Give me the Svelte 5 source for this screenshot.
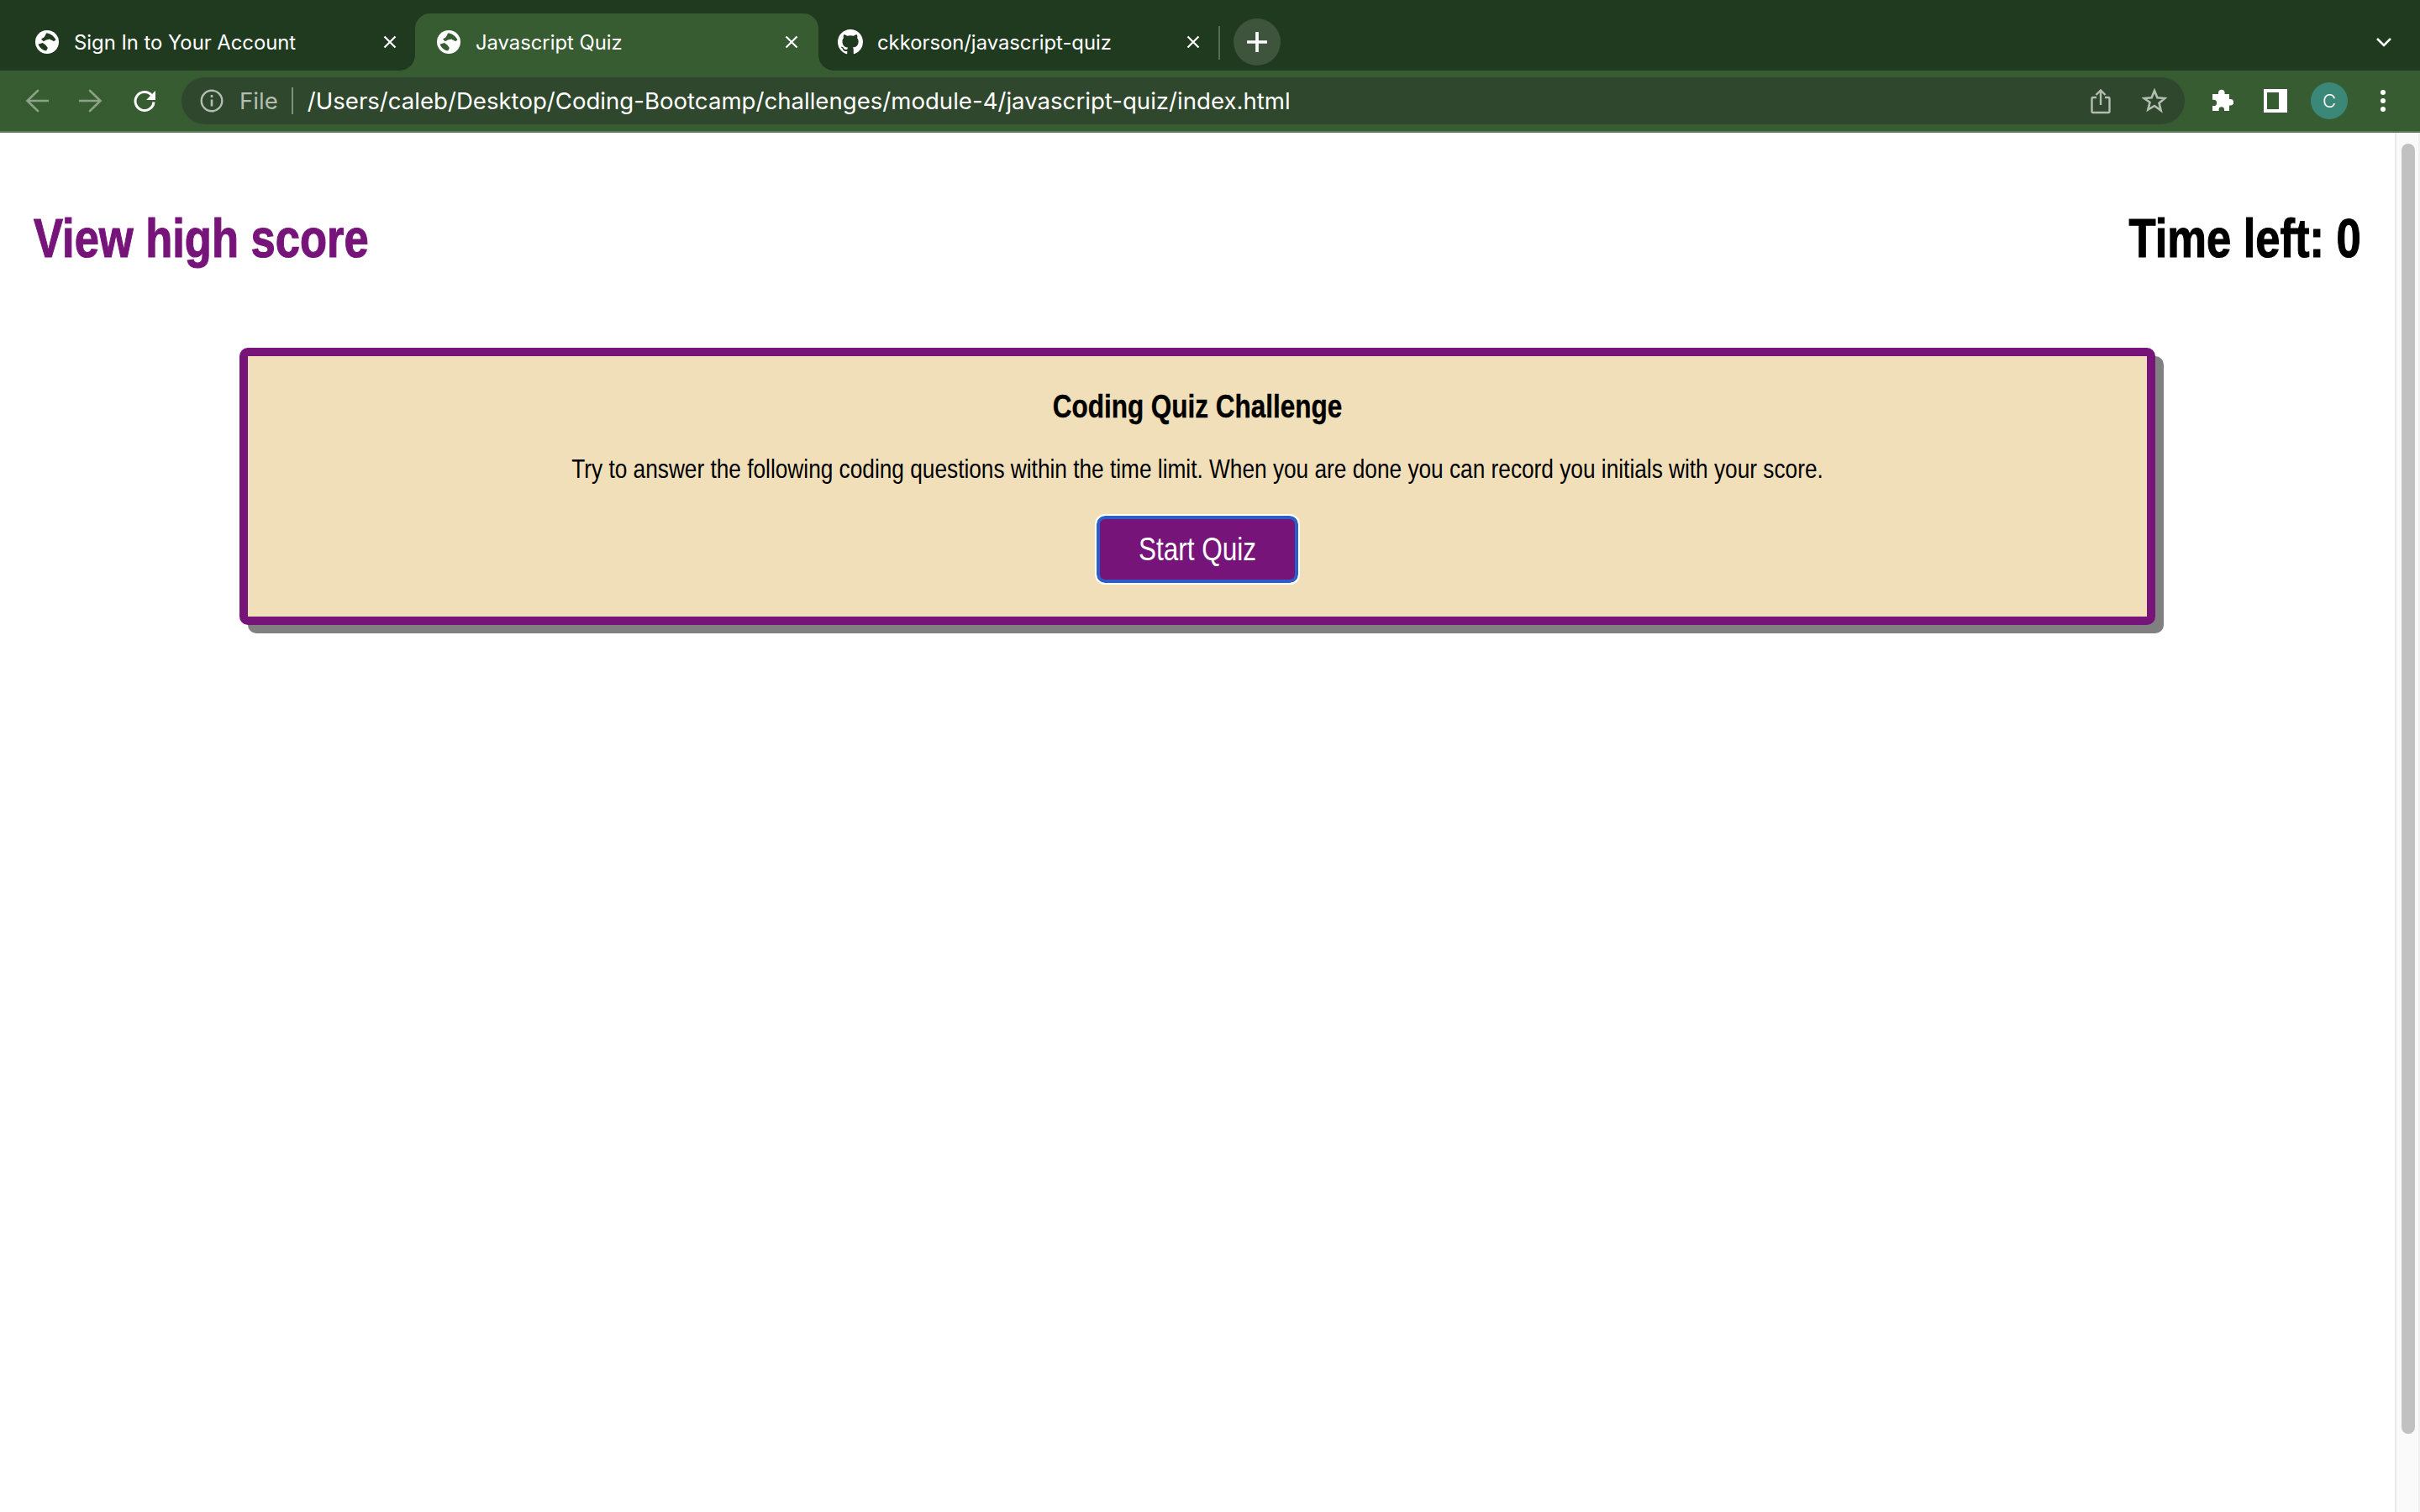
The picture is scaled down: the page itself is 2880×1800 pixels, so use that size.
<script>
  const tabs = [
    { title: "Sign In to Your Account", icon: "globe" },
    { title: "Javascript Quiz", icon: "globe", active: true },
    { title: "ckkorson/javascript-quiz", icon: "github" },
  ];
</script>

<div class="browser">
  <div class="tabstrip">
    {#each tabs as tab}
      <div class="tab" class:active={tab.active}>
        {#if tab.icon === "globe"}
          <svg class="favicon" viewBox="0 0 32 32">
            <circle cx="16" cy="16" r="16" fill="#fff" />
            <path
              d="M15 4c4 0 10 3 13 9l-3 2c-2-2-4-1-5-3l-5 1-4 2-3-3c2-1 4-2 5-4zM4 19l6-2 4 3 3 4-2 4c-5-1-9-4-11-9z"
              fill={tab.active ? "#375c31" : "#203a1f"}
            />
          </svg>
        {:else}
          <svg class="favicon github" viewBox="0 0 16 16">
            <path
              fill="#fff"
              d="M8 0C3.58 0 0 3.58 0 8c0 3.54 2.29 6.53 5.47 7.59.4.07.55-.17.55-.38 0-.19-.01-.82-.01-1.49-2.01.37-2.53-.49-2.69-.94-.09-.23-.48-.94-.82-1.13-.28-.15-.68-.52-.01-.53.63-.01 1.08.58 1.23.82.72 1.21 1.87.87 2.33.66.07-.52.28-.87.51-1.07-1.78-.2-3.64-.89-3.64-3.95 0-.87.31-1.59.82-2.15-.08-.2-.36-1.02.08-2.12 0 0 .67-.21 2.2.82.64-.18 1.32-.27 2-.27s1.36.09 2 .27c1.53-1.04 2.2-.82 2.2-.82.44 1.1.16 1.92.08 2.12.51.56.82 1.27.82 2.15 0 3.07-1.87 3.75-3.65 3.95.29.25.54.73.54 1.48 0 1.07-.01 1.93-.01 2.2 0 .21.15.46.55.38A8.01 8.01 0 0 0 16 8c0-4.42-3.58-8-8-8z"
            />
          </svg>
        {/if}
        <span class="tab-title">{tab.title}</span>
        <svg class="close" viewBox="0 0 16 16">
          <path d="M1.500 1.500l13 13M14.500 1.500l-13 13" stroke="#fff" stroke-width="2.2" />
        </svg>
      </div>
    {/each}
    <div class="divider"></div>
    <div class="newtab">
      <svg viewBox="0 0 24 24"><path d="M12 1v22M1 12h22" stroke="#fff" stroke-width="3.4" /></svg>
    </div>
    <svg class="chevron" viewBox="0 0 20 14">
      <path d="M2 3l8 8 8-8" fill="none" stroke="#fff" stroke-width="2.6" />
    </svg>
  </div>

  <div class="toolbar">
    <svg class="nav" viewBox="0 0 28 28">
      <path d="M27 14H3M15 2L2.500 14 15 26" fill="none" stroke="#8ba287" stroke-width="2.6" stroke-linecap="round" />
    </svg>
    <svg class="nav" viewBox="0 0 28 28">
      <path d="M1 14h24M13 2l12.500 12L13 26" fill="none" stroke="#8ba287" stroke-width="2.6" stroke-linecap="round" />
    </svg>
    <svg class="nav" viewBox="0 0 28 28">
      <path d="M22.500 7.500A11 11 0 1 0 25 15.500" fill="none" stroke="#fff" stroke-width="3" />
      <path d="M27 2v11H16z" fill="#fff" />
    </svg>
    <div class="omnibox">
      <svg class="info" viewBox="0 0 28 28">
        <circle cx="14" cy="14" r="12.300" fill="none" stroke="#b4bdb2" stroke-width="2.4" />
        <path d="M14 12.500v8M14 7v3" stroke="#b4bdb2" stroke-width="2.6" />
      </svg>
      <span class="scheme">File</span>
      <span class="sep"></span>
      <span class="url">/Users/caleb/Desktop/Coding-Bootcamp/challenges/module-4/javascript-quiz/index.html</span>
      <svg class="share" viewBox="0 0 24 32">
        <path
          d="M7 12H3a1.500 1.500 0 0 0-1.500 1.500v15A1.500 1.500 0 0 0 3 30h18a1.500 1.500 0 0 0 1.500-1.500v-15A1.500 1.500 0 0 0 21 12h-4M12 21V3.500M6.500 9L12 3.500 17.500 9"
          fill="none"
          stroke="#b4bdb2"
          stroke-width="2.4"
        />
      </svg>
      <svg class="star" viewBox="0 0 30 30">
        <path
          d="M15 3l3.400 8.300 9 .7-6.900 5.800 2.200 8.800L15 21l-7.700 4.600 2.200-8.800L2.600 12l9-.7z"
          fill="none"
          stroke="#b4bdb2"
          stroke-width="2.6"
        />
      </svg>
    </div>
    <svg class="puzzle" viewBox="0 0 28 28">
      <path
        fill="#fff"
        d="M3 6h7V4.500a3.800 3.800 0 0 1 7.600 0V6H23v6h1.500a3.500 3.500 0 0 1 0 7.400H23V26h-6v-1.500a3.200 3.200 0 0 0-6.400 0V26H3v-6h1.500a3.600 3.600 0 0 0 0-7.200H3z"
      />
    </svg>
    <div class="sidepanel"><span></span></div>
    <div class="avatar">C</div>
    <div class="kebab"><i></i><i></i><i></i></div>
  </div>
</div>

<div class="viewport">
  <main class="page">
    <header class="page-header">
      <a class="highscore" href="#scores">View high score</a>
      <span class="timer">Time left: 0</span>
    </header>
    <section class="card">
      <h2 class="narrow">Coding Quiz Challenge</h2>
      <p class="narrow">Try to answer the following coding questions within the time limit. When you are done you can record you initials with your score.</p>
      <button class="start"><span class="narrow">Start Quiz</span></button>
    </section>
  </main>
  <div class="scrollbar"><div class="thumb"></div></div>
</div>

<style>
  :global(body) {
    margin: 0;
    background: #fff;
    overflow: hidden;
  }

  .browser {
    font-family: Inter, "Liberation Sans", sans-serif;
    color: #fff;
  }

  .tabstrip {
    height: 84px;
    box-sizing: border-box;
    padding: 16px 0 0 16px;
    background: #203a1f;
    display: flex;
    align-items: stretch;
  }

  .tab {
    position: relative;
    width: 480px;
    margin-right: -2px;
    flex: none;
    box-sizing: border-box;
    padding: 0 24px 0 25px;
    display: flex;
    align-items: center;
    border-radius: 18px 18px 0 0;
  }

  .tab.active {
    background: #375c31;
  }

  /* the little curves where the active tab meets the toolbar */
  .tab.active::before,
  .tab.active::after {
    content: "";
    position: absolute;
    bottom: 0;
    width: 18px;
    height: 18px;
  }

  .tab.active::before {
    left: -18px;
    background: radial-gradient(circle at 0 0, transparent 17.5px, #375c31 18px);
  }

  .tab.active::after {
    right: -18px;
    background: radial-gradient(circle at 100% 0, transparent 17.5px, #375c31 18px);
  }

  .favicon {
    width: 28px;
    height: 28px;
    margin: 0 1px;
    flex: none;
  }

  .favicon.github {
    width: 30px;
    height: 30px;
    margin: 0;
  }

  .tab-title {
    margin-left: 17px;
    font-size: 23.8px;
    flex: 1;
    white-space: nowrap;
  }

  .close {
    width: 16px;
    height: 16px;
    flex: none;
  }

  .divider {
    width: 2px;
    height: 40px;
    margin: 15px 16px 0 0;
    background: #566b54;
  }

  .newtab {
    width: 56px;
    height: 56px;
    margin-top: 6px;
    border-radius: 50%;
    background: #3f543d;
    display: flex;
    align-items: center;
    justify-content: center;
  }

  .newtab svg {
    width: 26px;
    height: 26px;
  }

  .chevron {
    width: 20px;
    height: 14px;
    margin: 27px 33px 0 auto;
  }

  .toolbar {
    height: 74px;
    box-sizing: border-box;
    padding-left: 30px;
    background: #375c31;
    border-bottom: 2px solid #5c7a57;
    display: flex;
    align-items: center;
  }

  .nav {
    width: 28px;
    height: 28px;
    flex: none;
    margin-right: 36px;
  }

  .nav:nth-child(3) {
    margin-right: 30px;
  }

  .omnibox {
    width: 2384px;
    height: 56px;
    flex: none;
    box-sizing: border-box;
    padding: 0 21px 0 22px;
    border-radius: 28px;
    background: #2f472c;
    display: flex;
    align-items: center;
  }

  .info {
    width: 28px;
    height: 28px;
    flex: none;
  }

  .scheme {
    margin-left: 19px;
    font-size: 27.6px;
    color: #b4bdb2;
  }

  .sep {
    width: 2px;
    height: 32px;
    margin: 0 17px 0 16px;
    background: #80907e;
  }

  .url {
    font-size: 27.6px;
    flex: 1;
    white-space: nowrap;
  }

  .share {
    width: 24px;
    height: 32px;
    flex: none;
  }

  .star {
    width: 30px;
    height: 30px;
    margin-left: 37px;
    flex: none;
  }

  .puzzle {
    width: 28px;
    height: 28px;
    margin-left: 30px;
    flex: none;
  }

  .sidepanel {
    width: 28px;
    height: 28px;
    margin-left: 36px;
    box-sizing: border-box;
    background: #fff;
    padding: 4px 10px 4px 4px;
    flex: none;
  }

  .sidepanel span {
    display: block;
    height: 100%;
    background: #375c31;
  }

  .avatar {
    width: 44px;
    height: 44px;
    margin-left: 28px;
    border-radius: 50%;
    background: #3b8778;
    display: flex;
    align-items: center;
    justify-content: center;
    font-size: 22px;
    font-weight: 300;
    flex: none;
  }

  .kebab {
    margin-left: 39px;
    display: flex;
    flex-direction: column;
    gap: 4px;
  }

  .kebab i {
    width: 6px;
    height: 6px;
    border-radius: 50%;
    background: #fff;
  }

  .viewport {
    height: 1642px;
    display: flex;
  }

  .page {
    width: 2850px;
    flex: none;
    font-family: "Liberation Sans", Arial, sans-serif;
  }

  .page-header {
    display: flex;
    justify-content: space-between;
    padding: 89px 40px 0;
    font-size: 64px;
    font-weight: 700;
    line-height: 74px;
    -webkit-text-stroke: 1.2px;
  }

  /* no Arial Narrow here, so Liberation Sans gets squeezed to its width */
  .highscore,
  .timer,
  .narrow {
    display: block;
    transform: scaleX(0.82);
  }

  .highscore {
    color: #77147a;
    text-decoration: none;
    transform-origin: left;
  }

  .timer {
    color: #000;
    transform-origin: right;
  }

  .card {
    width: 80%;
    box-sizing: border-box;
    margin: 93px auto 0;
    height: 330px;
    padding-top: 37px;
    border: 10px solid #77147a;
    border-radius: 10px;
    background: #f0dfb9;
    box-shadow: 10px 10px 0 #808080;
    text-align: center;
  }

  .card h2 {
    margin: 0;
    font-size: 38.4px;
    line-height: 46px;
    -webkit-text-stroke: 0.4px;
  }

  .card p {
    margin: 32px 0 0;
    font-size: 32px;
    line-height: 38px;
  }

  .start {
    display: block;
    width: 240px;
    height: 80px;
    margin: 37px auto 0;
    padding: 0;
    box-sizing: border-box;
    border: 4px solid #2a5fc9;
    outline: 2px solid #fff;
    border-radius: 10px;
    background: #77147a;
    color: #fff;
    font: 38.4px "Liberation Sans", Arial, sans-serif;
  }

  .scrollbar {
    flex: 1;
    box-sizing: border-box;
    background: #fafafa;
    border-left: 2px solid #e8e8e8;
    border-right: 2px solid #f0f0f0;
    padding: 13px 4px 0 6px;
  }

  .thumb {
    height: 1536px;
    border-radius: 8px;
    background: #c1c1c1;
  }
</style>
